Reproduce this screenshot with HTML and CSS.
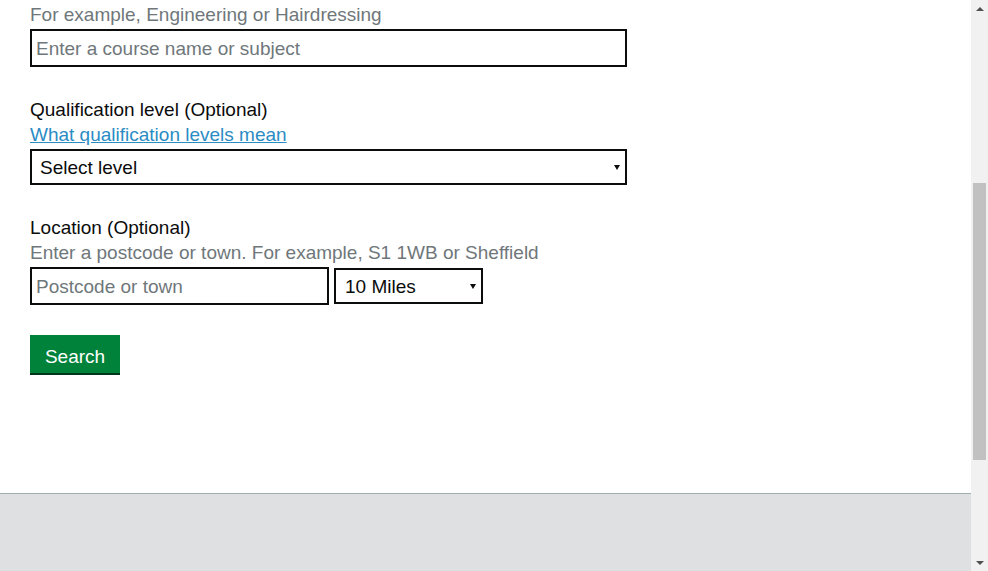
FILE: index.html
```html
<!DOCTYPE html>
<html lang="en">
<head>
<meta charset="utf-8">
<title>Find a course</title>
<link rel="stylesheet" href="styles.css">
</head>
<body>
<div class="viewport">
  <div class="page">
    <main class="content">
      <div class="form-group">
        <div class="form-hint">For example, Engineering or Hairdressing</div>
        <input class="form-control course-input" type="text" placeholder="Enter a course name or subject">
      </div>
      <div class="form-group">
        <label class="form-label">Qualification level (Optional)</label>
        <a class="form-link" href="#">What qualification levels mean</a>
        <div class="select-wrap wide">
          <select class="form-select">
            <option>Select level</option>
          </select>
        </div>
      </div>
      <div class="form-group">
        <label class="form-label">Location (Optional)</label>
        <div class="form-hint">Enter a postcode or town. For example, S1 1WB or Sheffield</div>
        <div class="inline-row">
          <input class="form-control postcode-input" type="text" placeholder="Postcode or town">
          <div class="select-wrap narrow">
            <select class="form-select">
              <option>10 Miles</option>
            </select>
          </div>
        </div>
      </div>
      <button class="button" type="button">Search</button>
    </main>
    <footer class="footer"></footer>
  </div>
  <div class="scrollbar">
    <div class="sb-arrow up"></div>
    <div class="sb-track">
      <div class="sb-thumb"></div>
    </div>
    <div class="sb-arrow down"></div>
  </div>
</div>
</body>
</html>
```

FILE: styles.css
```css
html, body {
  margin: 0;
  padding: 0;
  height: 100%;
  overflow: hidden;
}

body {
  font-family: "Liberation Sans", Arial, sans-serif;
  font-size: 19px;
  line-height: 25px;
  color: #0b0c0c;
  background: #ffffff;
}

.viewport {
  display: flex;
  height: 571px;
}

.page {
  flex: 1;
  display: flex;
  flex-direction: column;
  min-width: 0;
}

.content {
  flex: 1;
  padding: 2px 0 0 30px;
}

.form-group {
  display: flex;
  flex-direction: column;
  align-items: flex-start;
  margin-bottom: 30px;
}

.form-label {
  display: block;
}

.form-hint {
  color: #6f777b;
  margin-bottom: 2px;
}

.form-link {
  color: #2b8cc4;
  text-decoration: underline;
  margin-bottom: 2px;
}

.form-control {
  box-sizing: border-box;
  height: 38px;
  border: 2px solid #0b0c0c;
  border-radius: 0;
  padding: 5px 4px 4px;
  font-family: "Liberation Sans", Arial, sans-serif;
  font-size: 19px;
  line-height: 25px;
  color: #0b0c0c;
  background: #ffffff;
  margin: 0;
  outline: none;
}

.form-control::placeholder {
  color: #6f777b;
  opacity: 1;
}

.course-input {
  width: 597px;
}

.postcode-input {
  width: 299px;
}

.inline-row {
  display: flex;
  align-items: flex-start;
  gap: 5px;
}

.select-wrap {
  position: relative;
}

.select-wrap::after {
  content: "";
  position: absolute;
  right: 7px;
  top: 50%;
  margin-top: -2px;
  width: 0;
  height: 0;
  border-left: 3.5px solid transparent;
  border-right: 3.5px solid transparent;
  border-top: 5px solid #0b0c0c;
  pointer-events: none;
}

.form-select {
  display: block;
  box-sizing: border-box;
  height: 36px;
  border: 2px solid #0b0c0c;
  border-radius: 0;
  padding: 0 20px 0 8px;
  font-family: "Liberation Sans", Arial, sans-serif;
  font-size: 19px;
  color: #0b0c0c;
  background: #ffffff;
  appearance: none;
  -webkit-appearance: none;
  margin: 0;
  outline: none;
}

.wide .form-select {
  width: 597px;
}

.narrow {
  margin-top: 1px;
}

.narrow .form-select {
  width: 149px;
  padding-left: 9px;
}

.button {
  display: block;
  box-sizing: border-box;
  width: 90px;
  height: 38px;
  margin: 0;
  padding: 5px 0 0;
  border: none;
  border-radius: 0;
  background: #00823b;
  box-shadow: 0 2px 0 #003618;
  color: #ffffff;
  font-family: "Liberation Sans", Arial, sans-serif;
  font-size: 19px;
  line-height: 25px;
  text-align: center;
  cursor: pointer;
}

.footer {
  height: 77px;
  background: #dee0e2;
  border-top: 1px solid #a1acb2;
}

.scrollbar {
  width: 17px;
  background: #f1f1f1;
  display: flex;
  flex-direction: column;
}

.sb-arrow {
  height: 17px;
  display: flex;
  align-items: center;
  justify-content: center;
}

.sb-arrow::before {
  content: "";
  width: 0;
  height: 0;
  border-left: 4px solid transparent;
  border-right: 4px solid transparent;
}

.sb-arrow.up::before {
  border-bottom: 4px solid #505050;
}

.sb-arrow.down::before {
  border-top: 4px solid #505050;
}

.sb-track {
  flex: 1;
  display: flex;
  flex-direction: column;
  padding: 166px 2px 0;
}

.sb-thumb {
  height: 277px;
  background: #c1c1c1;
}
```
